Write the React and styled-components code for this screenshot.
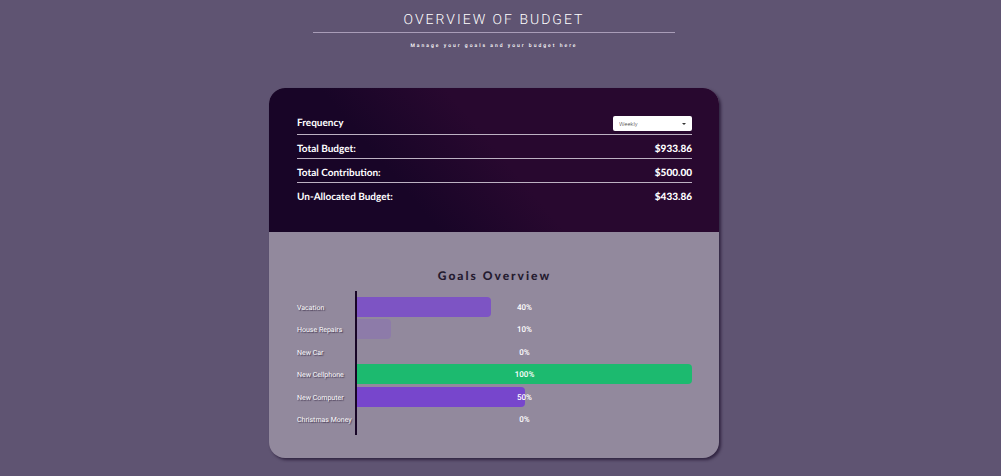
import React from "react";
import styled, { createGlobalStyle } from "styled-components";

const GlobalStyle = createGlobalStyle`
  *, *::before, *::after { box-sizing: border-box; }
  body {
    margin: 0;
    background: #5f5472;
    color: #fff;
    font-family: Roboto, sans-serif;
    text-rendering: geometricPrecision;
  }
`;

const Page = styled.main`
  display: flex;
  flex-direction: column;
  align-items: center;
  min-height: 100vh;
  padding: 8px 26px 18px 13px;
  background: #5f5472;
`;

const Header = styled.header`
  width: 100%;
  max-width: 362px;
  margin-bottom: 37px;
  text-align: center;
`;

const Title = styled.h1`
  margin: 0;
  border-bottom: 1px solid #a99db8;
  font-size: 14px;
  font-weight: 300;
  line-height: 24px;
  letter-spacing: 2px;
  text-transform: uppercase;
`;

const Subtitle = styled.p`
  margin: 8px 0 0;
  font-size: 5px;
  font-weight: 500;
  line-height: 10px;
  letter-spacing: 2px;
`;

const Card = styled.article`
  width: 100%;
  max-width: 450px;
  overflow: hidden;
  border-radius: 16px;
  background: #92899d;
  box-shadow: 2px 2px 3px rgba(25, 10, 40, 0.65);
`;

const Summary = styled.section`
  padding: 24px 27px 25px 28px;
  background: linear-gradient(50deg, #180527 0%, #180527 30%, #28082f 52%, #28082f 100%);
  font-family: Lato, sans-serif;
  font-weight: 700;
  font-size: 10px;
`;

const SummaryRow = styled.div`
  display: flex;
  align-items: flex-end;
  justify-content: space-between;
  height: 24px;
  padding-bottom: 2px;
  line-height: 13px;
  border-bottom: 1px solid ${(p) => (p.$last ? "transparent" : "#bcb1c2")};
`;

const FrequencyRow = styled(SummaryRow)`
  align-items: center;
  height: 23px;
  padding-bottom: 0;
`;

const Amount = styled.span`
  font-weight: 900;
`;

const Select = styled.select`
  appearance: none;
  width: 79px;
  height: 15px;
  padding: 0 14px 0 6px;
  border: 0;
  border-radius: 2px;
  background: #fff;
  color: #444;
  font-family: Roboto, sans-serif;
  font-size: 6px;
  font-weight: 300;
`;

const SelectWrap = styled.span`
  display: flex;
  position: relative;

  &::after {
    content: "";
    position: absolute;
    right: 6px;
    top: 7px;
    border: 2px solid transparent;
    border-top-color: #333;
    border-bottom: 0;
    pointer-events: none;
  }
`;

const Goals = styled.section`
  padding: 36px 27px 23px 28px;
`;

const GoalsTitle = styled.h2`
  margin: 0 0 7px;
  color: #251b30;
  font-family: Lato, sans-serif;
  font-size: 12px;
  font-weight: 900;
  line-height: 16px;
  letter-spacing: 2px;
  text-align: center;
`;

const Chart = styled.div`
  display: grid;
  grid-template-columns: 58px 1fr;
  height: 144px;
`;

const Column = styled.ul`
  display: flex;
  flex-direction: column;
  justify-content: space-between;
  margin: 0;
  padding: 6px 0;
  list-style: none;
`;

const Labels = styled(Column)`
  padding: 7px 0 5px;
`;

const Bars = styled(Column)`
  border-left: 2px solid #180527;
`;

const Label = styled.li`
  font-size: 7px;
  line-height: 20px;
  white-space: nowrap;
  text-shadow: 1px 1px 1px rgba(30, 15, 45, 0.7);
`;

const Track = styled.li`
  display: grid;
  height: 20px;
  align-items: center;

  & > * { grid-area: 1 / 1; }
`;

const Bar = styled.span`
  height: 20px;
  border-radius: 0 4px 4px 0;
  background: ${(p) => p.$color};
`;

const Percent = styled.span`
  padding-top: 2px;
  font-size: 8px;
  font-weight: 500;
  line-height: 18px;
  text-align: center;
`;

const totals = [
  ["Total Budget:", "$933.86"],
  ["Total Contribution:", "$500.00"],
  ["Un-Allocated Budget:", "$433.86"],
];

const goals = [
  { name: "Vacation", percent: 40, color: "#7d54c4" },
  { name: "House Repairs", percent: 10, color: "#8d7ba9" },
  { name: "New Car", percent: 0, color: "#92899d" },
  { name: "New Cellphone", percent: 100, color: "#1cba6f" },
  { name: "New Computer", percent: 50, color: "#7746cc" },
  { name: "Christmas Money", percent: 0, color: "#92899d" },
];

export default function App() {
  return (
    <>
      <GlobalStyle />
      <Page>
        <Header>
          <Title>Overview of Budget</Title>
          <Subtitle>Manage your goals and your budget here</Subtitle>
        </Header>
        <Card>
          <Summary>
            <FrequencyRow>
              <label htmlFor="frequency">Frequency</label>
              <SelectWrap>
                <Select id="frequency" defaultValue="Weekly">
                  <option>Weekly</option>
                  <option>Monthly</option>
                </Select>
              </SelectWrap>
            </FrequencyRow>
            {totals.map(([name, amount], i) => (
              <SummaryRow key={name} $last={i === totals.length - 1}>
                <span>{name}</span>
                <Amount>{amount}</Amount>
              </SummaryRow>
            ))}
          </Summary>
          <Goals>
            <GoalsTitle>Goals Overview</GoalsTitle>
            <Chart>
              <Labels>
                {goals.map((g) => <Label key={g.name}>{g.name}</Label>)}
              </Labels>
              <Bars>
                {goals.map((g) => (
                  <Track key={g.name}>
                    <Bar $color={g.color} style={{ width: `${g.percent}%` }} />
                    <Percent>{g.percent}%</Percent>
                  </Track>
                ))}
              </Bars>
            </Chart>
          </Goals>
        </Card>
      </Page>
    </>
  );
}
